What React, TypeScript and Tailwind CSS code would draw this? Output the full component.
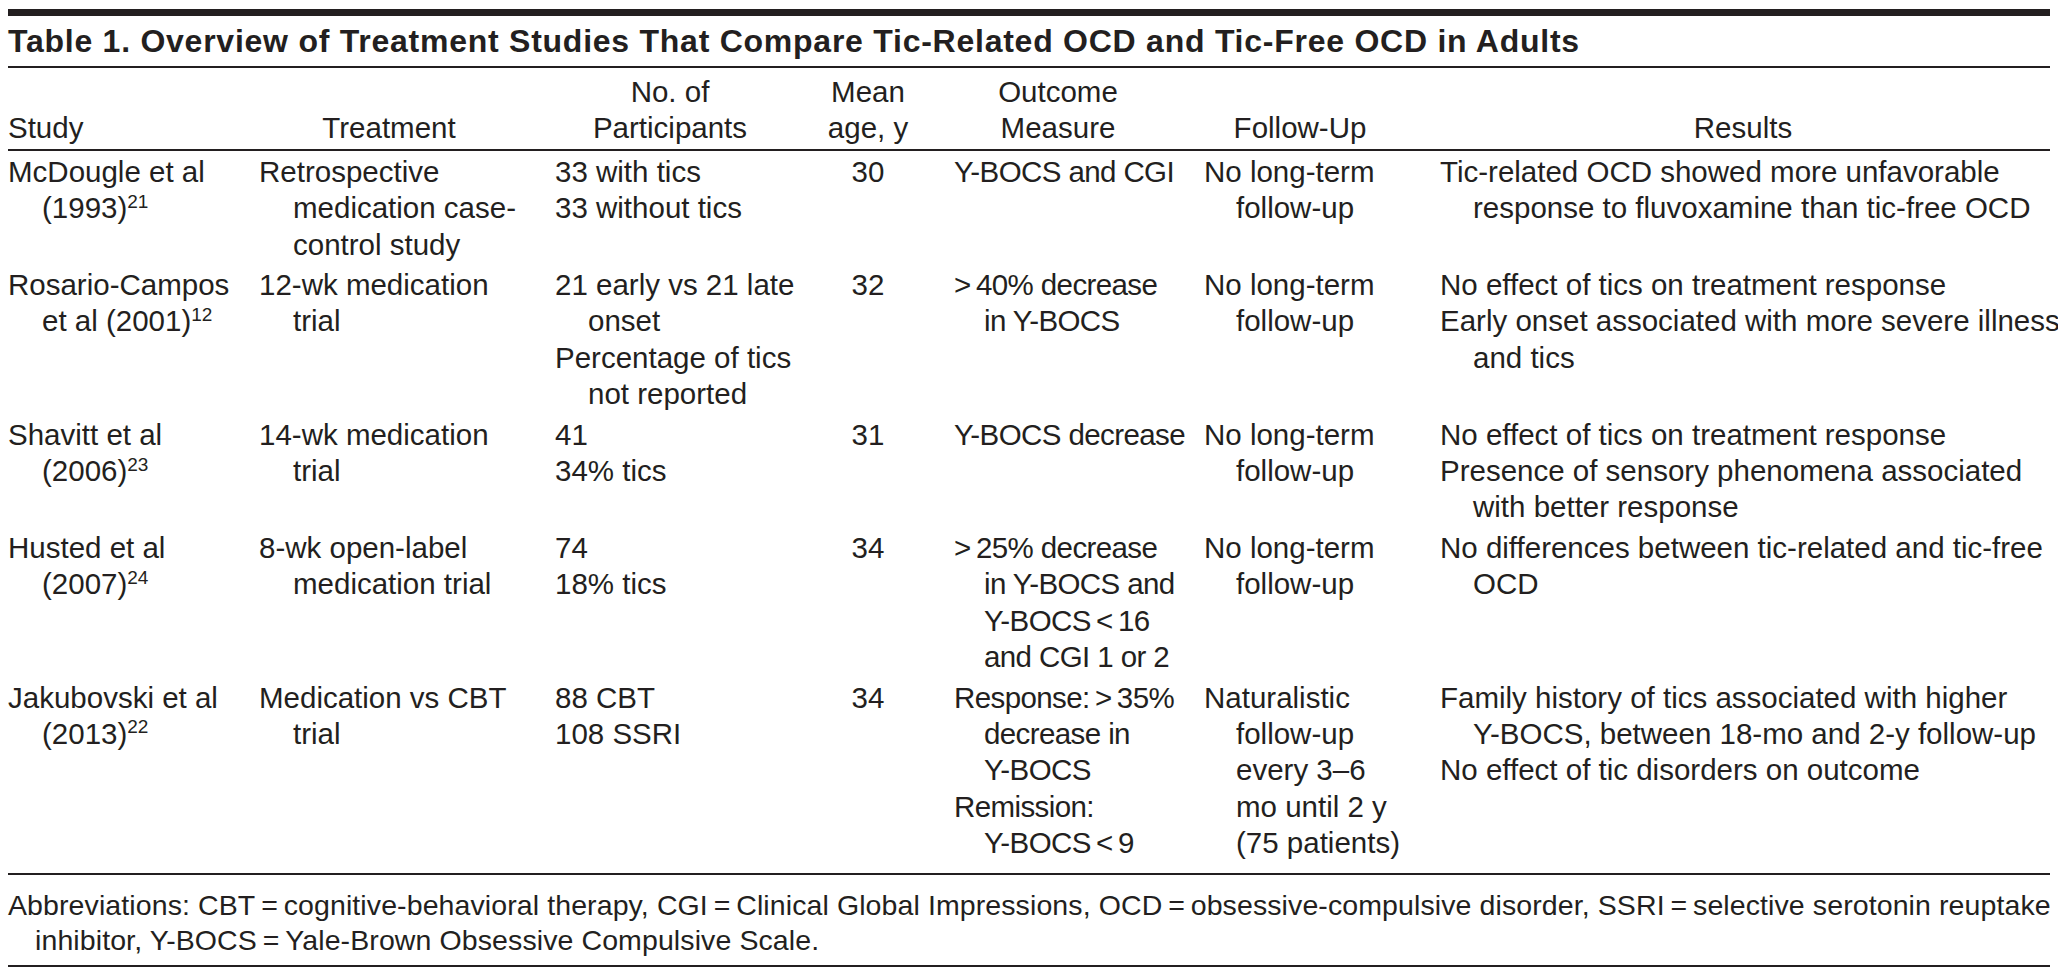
import React from "react";

type Line = React.ReactNode;
type Entry = Line[];

type Row = {
  study: Entry;
  treatment: Entry;
  participants: Entry[];
  age: string;
  outcome: Entry[];
  followUp: Entry;
  results: Entry[];
};

const T = "\u2009";

const Sup = ({ children }: { children: React.ReactNode }) => (
  <sup className="text-[19px] top-[-0.55em]">{children}</sup>
);

const rows: Row[] = [
  {
    study: ["McDougle et al", <>(1993)<Sup>21</Sup></>],
    treatment: ["Retrospective", "medication case-", "control study"],
    participants: [["33 with tics"], ["33 without tics"]],
    age: "30",
    outcome: [["Y-BOCS and CGI"]],
    followUp: ["No long-term", "follow-up"],
    results: [["Tic-related OCD showed more unfavorable", "response to fluvoxamine than tic-free OCD"]],
  },
  {
    study: ["Rosario-Campos", <>et al (2001)<Sup>12</Sup></>],
    treatment: ["12-wk medication", "trial"],
    participants: [["21 early vs 21 late", "onset"], ["Percentage of tics", "not reported"]],
    age: "32",
    outcome: [[`>${T}40% decrease`, "in Y-BOCS"]],
    followUp: ["No long-term", "follow-up"],
    results: [
      ["No effect of tics on treatment response"],
      ["Early onset associated with more severe illness", "and tics"],
    ],
  },
  {
    study: ["Shavitt et al", <>(2006)<Sup>23</Sup></>],
    treatment: ["14-wk medication", "trial"],
    participants: [["41"], ["34% tics"]],
    age: "31",
    outcome: [["Y-BOCS decrease"]],
    followUp: ["No long-term", "follow-up"],
    results: [
      ["No effect of tics on treatment response"],
      ["Presence of sensory phenomena associated", "with better response"],
    ],
  },
  {
    study: ["Husted et al", <>(2007)<Sup>24</Sup></>],
    treatment: ["8-wk open-label", "medication trial"],
    participants: [["74"], ["18% tics"]],
    age: "34",
    outcome: [[`>${T}25% decrease`, "in Y-BOCS and", `Y-BOCS${T}<${T}16`, "and CGI 1 or 2"]],
    followUp: ["No long-term", "follow-up"],
    results: [["No differences between tic-related and tic-free", "OCD"]],
  },
  {
    study: ["Jakubovski et al", <>(2013)<Sup>22</Sup></>],
    treatment: ["Medication vs CBT", "trial"],
    participants: [["88 CBT"], ["108 SSRI"]],
    age: "34",
    outcome: [
      [`Response:${T}>${T}35%`, "decrease in", "Y-BOCS"],
      ["Remission:", `Y-BOCS${T}<${T}9`],
    ],
    followUp: ["Naturalistic", "follow-up", "every 3–6", "mo until 2 y", "(75 patients)"],
    results: [
      ["Family history of tics associated with higher", "Y-BOCS, between 18-mo and 2-y follow-up"],
      ["No effect of tic disorders on outcome"],
    ],
  },
];

function Hanging({ lines, indent = "pl-[33px]" }: { lines: Entry; indent?: string }) {
  return (
    <div>
      {lines.map((l, i) => (
        <div key={i} className={`whitespace-nowrap ${i > 0 ? indent : ""}`}>
          {l}
        </div>
      ))}
    </div>
  );
}

const cols = "grid grid-cols-[251px_296px_265px_134px_250px_236px_1fr]";

export default function App() {
  return (
    <div className="min-h-screen bg-white font-['Liberation_Sans',Arial,sans-serif] text-[#231f20]">
      <div className="mx-2 pt-[9px]">
        <div className="h-[7px] bg-[#231f20]" />
        <div className="flex h-[50px] items-center whitespace-nowrap text-[32px] font-bold leading-[50px] tracking-[0.75px]">
          Table 1. Overview of Treatment Studies That Compare Tic-Related OCD and Tic-Free OCD in Adults
        </div>
        <div className="h-[2px] bg-[#231f20]" />

        {/* header */}
        <div className={`${cols} border-b-2 border-[#231f20] pb-[2px] pt-[6px] text-[29.5px] leading-[36.4px]`}>
          <div className="self-end">Study</div>
          <div className="self-end">
            <div className="w-[260px] text-center">Treatment</div>
          </div>
          <div className="self-end">
            <div className="w-[230px] text-center">
              <div>No. of</div>
              <div>Participants</div>
            </div>
          </div>
          <div className="self-end">
            <div className="w-[96px] text-center">
              <div>Mean</div>
              <div>age, y</div>
            </div>
          </div>
          <div className="self-end">
            <div className="w-[208px] text-center">
              <div>Outcome</div>
              <div>Measure</div>
            </div>
          </div>
          <div className="self-end">
            <div className="w-[192px] text-center">Follow-Up</div>
          </div>
          <div className="self-end">
            <div className="w-[606px] text-center">Results</div>
          </div>
        </div>

        {/* body */}
        <div className="border-b-2 border-[#231f20] pb-[11px] text-[29.5px] leading-[36.4px]">
          {rows.map((r, i) => (
            <div key={i} className={`${cols} ${i === 0 ? "pt-[3px]" : "pt-[4px]"}`}>
              <Hanging lines={r.study} indent="pl-[34px]" />
              <Hanging lines={r.treatment} indent="pl-[34px]" />
              <div>
                {r.participants.map((e, j) => (
                  <Hanging key={j} lines={e} />
                ))}
              </div>
              <div>
                <div className="w-[96px] text-center">{r.age}</div>
              </div>
              <div className="tracking-[-0.6px]">
                {r.outcome.map((e, j) => (
                  <Hanging key={j} lines={e} indent="pl-[30px]" />
                ))}
              </div>
              <Hanging lines={r.followUp} indent="pl-[32px]" />
              <div>
                {r.results.map((e, j) => (
                  <Hanging key={j} lines={e} />
                ))}
              </div>
            </div>
          ))}
        </div>

        {/* footnote */}
        <div className="border-b-2 border-[#231f20] pb-[7px] pt-[13px] text-[28.5px] leading-[35px] tracking-[0.1px]">
          <div className="whitespace-nowrap">
            Abbreviations: CBT{T}={T}cognitive-behavioral therapy, CGI{T}={T}Clinical Global Impressions, OCD{T}={T}obsessive-compulsive disorder, SSRI{T}={T}selective serotonin reuptake
          </div>
          <div className="whitespace-nowrap pl-[27px]">
            inhibitor, Y-BOCS{T}={T}Yale-Brown Obsessive Compulsive Scale.
          </div>
        </div>
      </div>
    </div>
  );
}
